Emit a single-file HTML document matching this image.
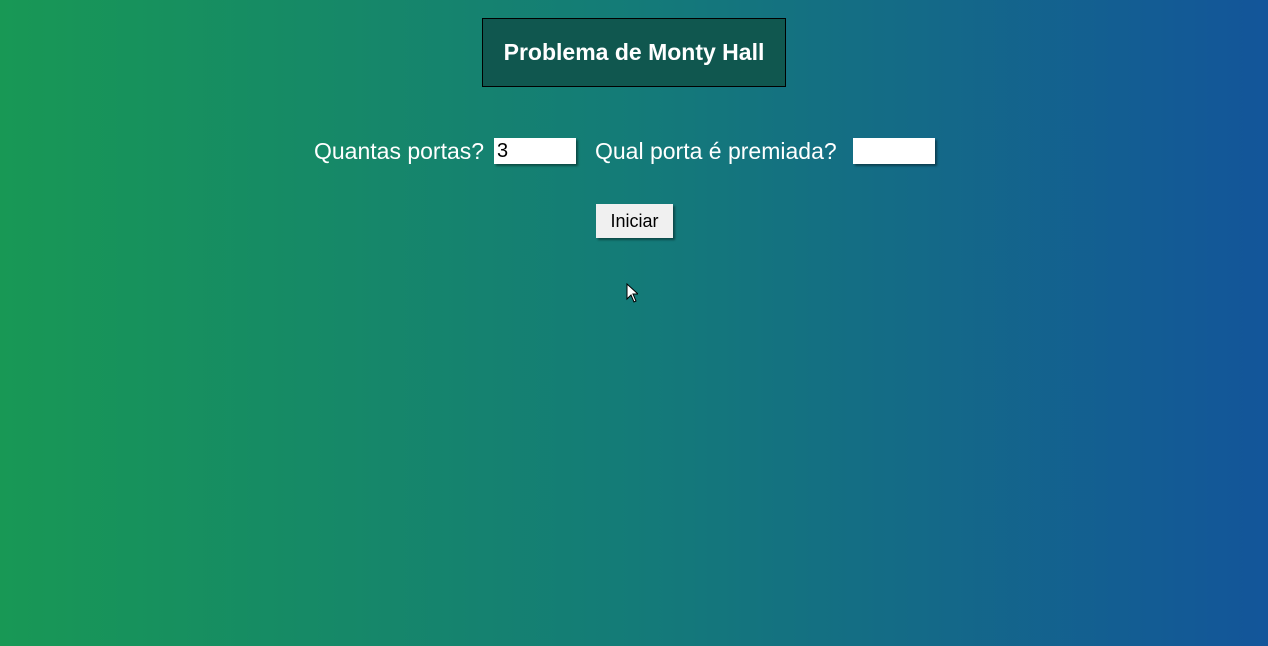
<!DOCTYPE html>
<html><head><style>
html,body{margin:0;width:1268px;height:646px;overflow:hidden}
body{background:linear-gradient(to right,#189855,#147b78 50%,#13559a);font-family:"Liberation Sans",sans-serif;position:relative;color:#fff}
.t{position:absolute;left:482px;top:18px;width:302px;height:67px;border:1px solid #000;background:#10574f;font-weight:bold;font-size:23px;text-align:center;line-height:67px}
.l{position:absolute;top:138px;font-size:23px;line-height:26px}
.i{position:absolute;top:138px;width:82px;height:26px;background:#fff;box-shadow:2px 2px 2px rgba(0,0,0,.4);color:#000;font-size:20px;line-height:26px;box-sizing:border-box;padding-left:3px}
.b{position:absolute;left:596px;top:204px;width:77px;height:34px;background:#f0f0f0;box-shadow:2px 2px 2px rgba(0,0,0,.4);color:#000;font-size:18px;text-align:center;line-height:34px}
</style></head><body>
<div class="t">Problema de Monty Hall</div>
<div class="l" style="left:314px">Quantas portas?</div>
<div class="i" style="left:494px">3</div>
<div class="l" style="left:595px">Qual porta é premiada?</div>
<div class="i" style="left:853px"></div>
<div class="b">Iniciar</div>
<svg style="position:absolute;left:626px;top:283px" width="12" height="20"><path d="M1 1 L1 16 L5 12 L8 19 L10 18 L7 11 L12 11 Z" fill="#fff" stroke="#000"/></svg>
</body></html>
